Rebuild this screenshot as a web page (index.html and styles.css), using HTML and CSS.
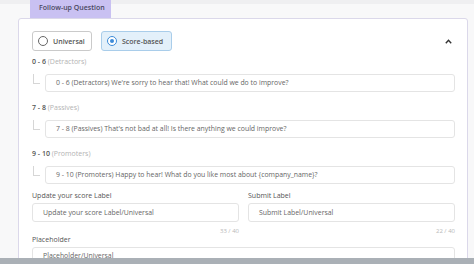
FILE: index.html
```html
<!DOCTYPE html>
<html lang="en">
<head>
  <meta charset="UTF-8">
  <meta name="viewport" content="width=device-width, initial-scale=1.0">
  <title>Follow-up Question</title>
  <link rel="stylesheet" href="styles.css">
</head>
<body>
  <div class="page">
    <div class="tab">Follow-up Question</div>
    <div class="card">
      <!-- Tipo di domanda -->
      <div class="mode-row">
        <div class="modes">
          <label class="mode mode-universal"><span class="radio"></span>Universal</label>
          <label class="mode mode-score mode-active"><span class="radio radio-on"></span>Score-based</label>
        </div>
        <svg class="chevron" width="7" height="5" viewBox="0 0 7 5">
          <path d="M0.8 4.2 L3.5 1.3 L6.2 4.2" fill="none" stroke="#333" stroke-width="1.4"/>
        </svg>
      </div>

      <div class="segment">
        <div class="segment-label"><b>0 - 6</b> <span class="muted">(Detractors)</span></div>
        <div class="segment-row">
          <span class="branch"></span>
          <div class="field">0 - 6 (Detractors) We're sorry to hear that! What could we do to improve?</div>
        </div>
      </div>

      <div class="segment">
        <div class="segment-label"><b>7 - 8</b> <span class="muted">(Passives)</span></div>
        <div class="segment-row">
          <span class="branch"></span>
          <div class="field">7 - 8 (Passives) That's not bad at all! Is there anything we could improve?</div>
        </div>
      </div>

      <div class="segment">
        <div class="segment-label"><b>9 - 10</b> <span class="muted">(Promoters)</span></div>
        <div class="segment-row">
          <span class="branch"></span>
          <div class="field">9 - 10 (Promoters) Happy to hear! What do you like most about {company_name}?</div>
        </div>
      </div>

      <div class="pair">
        <div class="col">
          <div class="field-label">Update your score Label</div>
          <div class="field">Update your score Label/Universal</div>
          <div class="counter">33 / 40</div>
        </div>
        <div class="col">
          <div class="field-label">Submit Label</div>
          <div class="field">Submit Label/Universal</div>
          <div class="counter">22 / 40</div>
        </div>
      </div>

      <div class="field-label">Placeholder</div>
      <div class="field">Placeholder/Universal</div>
    </div>
  </div>
  <div class="bottom-bar"></div>
</body>
</html>
```

FILE: styles.css
```css
body {
  margin: 0;
  height: 264px;
  overflow: hidden;
  font-family: "Open Sans", Arial, sans-serif;
  color: #555;
  background: linear-gradient(#efeff1 0, #efeff1 4px, #f8f8f9 4px);
}
.page {
  padding-left: 18px;
}
.tab {
  width: 81px;
  height: 18px;
  margin-left: 12px;
  padding-left: 9px;
  box-sizing: border-box;
  background-color: #c9c1f2;
  color: #4a4860;
  font-size: 7px;
  font-weight: 600;
  line-height: 16px;
}
.card {
  width: 450px;
  box-sizing: border-box;
  padding: 12px 12px 20px 13px;
  background-color: white;
  border: 1px solid #dbd8ea;
  border-radius: 3px 3px 0 0;
}
.mode-row {
  display: flex;
  justify-content: space-between;
  align-items: center;
  height: 20px;
}
.modes {
  display: flex;
  gap: 9px;
}
.mode {
  display: flex;
  align-items: center;
  gap: 5px;
  height: 20px;
  padding-left: 5px;
  box-sizing: border-box;
  border: 1px solid #cacaca;
  border-radius: 3px;
  background-color: white;
  font-size: 7px;
  font-weight: 600;
  color: #555;
}
.mode-universal {
  width: 60px;
}
.mode-score {
  width: 71px;
}
.mode-active {
  background-color: #e3f0fa;
  border-color: #a9cdea;
}
.radio {
  width: 10px;
  height: 10px;
  box-sizing: border-box;
  border: 1px solid #666;
  border-radius: 50%;
  display: flex;
  align-items: center;
  justify-content: center;
  background-color: white;
}
.radio-on {
  border-color: #3d8bd8;
}
.radio-on::after {
  content: "";
  width: 4px;
  height: 4px;
  border-radius: 50%;
  background-color: #3d8bd8;
}
.chevron {
  margin-right: 3px;
}
.segment {
  margin-top: 6px;
}
.segment + .segment {
  margin-top: 11px;
}
.segment-label {
  font-size: 7px;
  line-height: 10px;
  color: #555;
}
.segment-label b {
  font-weight: 600;
}
.muted {
  color: #b3b3b3;
}
.segment-row {
  display: flex;
  margin-top: 7px;
}
.branch {
  flex: none;
  width: 6px;
  height: 9px;
  margin-left: 1px;
  margin-right: 5px;
  border-left: 1px solid #d6d6d6;
  border-bottom: 1px solid #d6d6d6;
}
.field {
  flex: 1;
  height: 18px;
  box-sizing: border-box;
  padding-left: 10px;
  border: 1px solid #e4e4e4;
  border-radius: 3px;
  background-color: white;
  font-size: 6.9px;
  line-height: 16px;
  color: #666;
  white-space: nowrap;
  overflow: hidden;
}
.pair {
  display: grid;
  grid-template-columns: 1fr 1fr;
  column-gap: 9px;
  margin-top: 7px;
}
.field-label {
  font-size: 7px;
  line-height: 10px;
  margin-bottom: 2px;
  color: #555;
}
.pair .field {
  height: 19px;
  line-height: 17px;
}
.counter {
  margin-top: 5px;
  font-size: 6px;
  line-height: 8px;
  text-align: right;
  color: #b8b8b8;
}
.bottom-bar {
  position: fixed;
  left: 0;
  right: 0;
  bottom: 0;
  height: 6px;
  background-color: #aab0b6;
}
```
